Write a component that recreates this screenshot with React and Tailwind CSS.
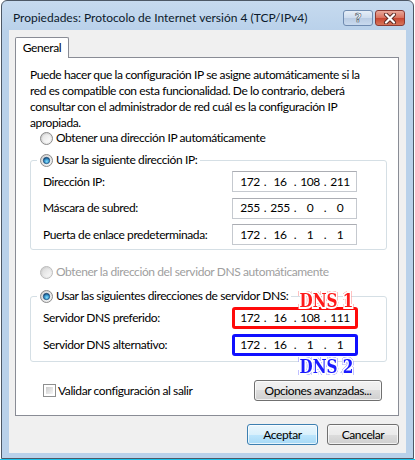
import React from 'react'

const ui = "font-['Lato',sans-serif] text-[12px] tracking-[-0.4px] text-black"

const Radio = ({ checked, disabled }) => (
  <svg width="13" height="13" viewBox="0 0 13 13" className="shrink-0">
    <defs>
      <linearGradient id="rbFill" x1="0" y1="0" x2="1" y2="1">
        <stop offset="0" stopColor="#c9c9c9" />
        <stop offset="1" stopColor="#f8f8f8" />
      </linearGradient>
      <linearGradient id="rbInner" x1="0" y1="0" x2="1" y2="1">
        <stop offset="0" stopColor="#e2e2e2" />
        <stop offset="1" stopColor="#ffffff" />
      </linearGradient>
      <radialGradient id="rbDot" cx="0.55" cy="0.65" r="0.6">
        <stop offset="0" stopColor="#8de2f9" />
        <stop offset="0.55" stopColor="#3a9bd3" />
        <stop offset="1" stopColor="#164b78" />
      </radialGradient>
    </defs>
    <circle cx="6.5" cy="6.5" r="6" fill="url(#rbFill)" stroke={disabled ? '#bcbcbc' : '#8b8b8b'} />
    <circle cx="6.5" cy="6.5" r="4.2" fill="url(#rbInner)" opacity={disabled ? 0.6 : 1} />
    {checked && <circle cx="6.5" cy="6.5" r="3.2" fill="url(#rbDot)" stroke="#1a4570" strokeWidth="0.7" />}
  </svg>
)

const Checkbox = () => (
  <div className="w-[13px] h-[13px] border border-[#8e8f8f] bg-white p-[2px] shrink-0">
    <div className="w-full h-full bg-[linear-gradient(135deg,#cbcbcb,#f6f6f6)]" />
  </div>
)

const IpBox = ({ parts, ring }) => {
  let box = 'h-[21px] w-[125px] pl-[5px] border border-[#c5c9cf] border-t-[#abadb3]'
  if (ring === 'red') box = 'h-[22px] w-[126px] pl-[3px] border-[3px] border-[#ff0a0a] rounded-[3px]'
  if (ring === 'blue') box = 'h-[22px] w-[126px] pl-[3px] border-[3px] border-[#1010ff] rounded-[3px]'
  return (
    <div className={`flex items-center bg-white ${box}`}>
      {parts.map((p, i) => (
        <React.Fragment key={i}>
          {i > 0 && <span className="w-[6px] text-center">.</span>}
          <span className="w-[24px] text-center">{p}</span>
        </React.Fragment>
      ))}
    </div>
  )
}

const Button = ({ children, primary, className = '' }) => (
  <button
    className={`h-[21px] rounded-[3px] border leading-none ${
      primary
        ? 'border-[#3c7fb1] bg-[linear-gradient(#eaf6fd_0%,#d9f0fc_50%,#bee6fd_50%,#a7d9f5_100%)]'
        : 'border-[#707070] bg-[linear-gradient(#f2f2f2_0%,#ebebeb_50%,#dddddd_50%,#cfcfcf_100%)]'
    } shadow-[inset_0_0_0_1px_rgba(255,255,255,0.7)] ${className}`}
  >
    {children}
  </button>
)

const Group = ({ legend, children, className = '' }) => (
  <fieldset className={`border border-[#d5dfe5] rounded-[3px] p-0 ml-[14px] w-[357px] ${className}`}>
    <legend className="ml-[6px] px-[3px] h-[16px] flex items-center gap-[3px]">
      <Radio checked />
      <span>{legend}</span>
    </legend>
    {children}
  </fieldset>
)

const Row = ({ label, children }) => (
  <div className="grid grid-cols-[189px_126px] items-center pl-[12px]">
    <span className="whitespace-nowrap">{label}</span>
    {children}
  </div>
)

const Tag = ({ children, color, className = '' }) => (
  <span
    className={`absolute right-[5px] font-['DejaVu_Serif',serif] font-bold text-[19px] tracking-normal leading-none origin-right scale-x-[0.8] [paint-order:stroke_fill] [-webkit-text-stroke:4px_#ffffff] ${color} ${className}`}
  >
    {children}
  </span>
)

export default function App() {
  return (
    <div className={`w-[415px] h-[460px] bg-white flex flex-col ${ui}`}>
      <div className="ml-[1px] w-[413px] h-[459px] border border-[#4d5866] rounded-t-[6px] bg-[linear-gradient(#c6daef,#b9d1ea_30px,#b9d1ea)] flex flex-col">
        {/* title bar */}
        <div className="h-[29px] flex items-start pl-[11px] pr-[8px]">
          <span className="mt-[8px] text-[12px] tracking-normal text-[#0c1a2b] whitespace-nowrap">
            Propiedades: Protocolo de Internet versión 4 (TCP/IPv4)
          </span>
          <div className="ml-auto mt-[9px] flex gap-[2px]">
            <div className="w-[30px] h-[16px] rounded-[3px] border border-[#6f8bb0] bg-[linear-gradient(#e6eef8_0%,#cddcee_50%,#b8cbe3_50%,#c9daee_100%)] flex items-center justify-center">
              <span className="font-['DejaVu_Sans',sans-serif] font-bold text-[12px] leading-none text-white [-webkit-text-stroke:0.6px_#4b5a6c]">?</span>
            </div>
            <div className="w-[30px] h-[16px] rounded-[3px] border border-[#8b3a33] bg-[linear-gradient(#e9a89a_0%,#d9705c_50%,#c7442f_50%,#d7765c_100%)] flex items-center justify-center">
              <svg width="16" height="11" viewBox="0 0 16 11">
                <path d="M4 1.5 L12 9.5 M12 1.5 L4 9.5" stroke="#5b2a24" strokeWidth="4" strokeLinecap="round" />
                <path d="M4 1.5 L12 9.5 M12 1.5 L4 9.5" stroke="#ffffff" strokeWidth="2.2" strokeLinecap="round" />
              </svg>
            </div>
          </div>
        </div>

        {/* client area */}
        <div className="ml-[7px] w-[397px] h-[423px] bg-[#f0f0f0] pt-[7px] pl-[6px] pr-[7px] flex flex-col">
          <div className="relative z-10 -mb-[1px] w-[54px] h-[21px] bg-white border border-b-0 border-[#898c95] rounded-t-[2px] flex items-center justify-center">
            General
          </div>
          <div className="h-[359px] border border-[#898c95] bg-white flex flex-col">
            <p className="pl-[14px] pt-[9px] leading-[16px] whitespace-nowrap">
              Puede hacer que la configuración IP se asigne automáticamente si la
              <br />
              red es compatible con esta funcionalidad. De lo contrario, deberá
              <br />
              consultar con el administrador de red cuál es la configuración IP
              <br />
              apropiada.
            </p>

            <div className="-mt-[1px] pl-[24px] h-[16px] flex items-center gap-[3px]">
              <Radio />
              <span>Obtener una dirección IP automáticamente</span>
            </div>

            <Group legend="Usar la siguiente dirección IP:" className="mt-[6px]">
              <div className="pt-[3px] pb-[4px] flex flex-col gap-[5.5px]">
                <Row label="Dirección IP:">
                  <IpBox parts={['172', '16', '108', '211']} />
                </Row>
                <Row label="Máscara de subred:">
                  <IpBox parts={['255', '255', '0', '0']} />
                </Row>
                <Row label="Puerta de enlace predeterminada:">
                  <IpBox parts={['172', '16', '1', '1']} />
                </Row>
              </div>
            </Group>

            <div className="mt-[14px] pl-[24px] h-[16px] flex items-center gap-[3px] text-[#a0a0a0]">
              <Radio disabled />
              <span>Obtener la dirección del servidor DNS automáticamente</span>
            </div>

            <Group legend="Usar las siguientes direcciones de servidor DNS:" className="mt-[8px]">
              <div className="pt-[3px] pb-[5px] flex flex-col gap-[5px]">
                <Row label="Servidor DNS preferido:">
                  <div className="relative">
                    <IpBox parts={['172', '16', '108', '111']} ring="red" />
                    <Tag color="text-[#ff1a1a]" className="-top-[16px] [filter:drop-shadow(0_0_0.6px_#ff0000)]">DNS 1</Tag>
                  </div>
                </Row>
                <Row label="Servidor DNS alternativo:">
                  <div className="relative">
                    <IpBox parts={['172', '16', '1', '1']} ring="blue" />
                    <Tag color="text-[#1a1aff]" className="top-[23px] [filter:drop-shadow(0_0_0.6px_#0000ff)]">DNS 2</Tag>
                  </div>
                </Row>
              </div>
            </Group>

            <div className="mt-[18px] pl-[27px] pr-[16px] flex items-center">
              <Checkbox />
              <span className="ml-[2px]">Validar configuración al salir</span>
              <Button className="ml-auto w-[128px]">Opciones avanzadas...</Button>
            </div>
          </div>

          <div className="mt-[8px] flex justify-end gap-[9px]">
            <Button primary className="w-[71px]">Aceptar</Button>
            <Button className="w-[72px]">Cancelar</Button>
          </div>
        </div>
      </div>
      <div className="h-[1px] bg-[#19c3ec]" />
    </div>
  )
}
